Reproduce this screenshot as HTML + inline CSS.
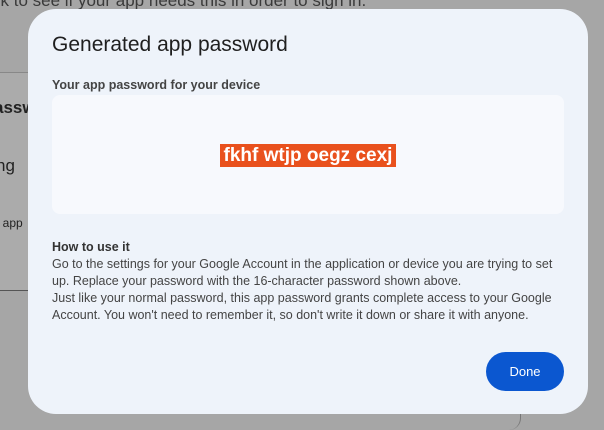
<!DOCTYPE html>
<html><head><style>
body{margin:0;width:604px;height:426px;overflow:hidden;background:#a6a6a6;font-family:"Liberation Sans",sans-serif;position:relative}
.bgtop{position:absolute;left:-8px;top:-9px;font-size:17px;color:#3a3a3a;white-space:nowrap}
.leftp{position:absolute;left:0;top:72px;width:40px;height:217px;background:#ababab;border-top:1px solid #888;border-bottom:1px solid #555}
.lt{position:absolute;font-size:17px;color:#222;white-space:nowrap}
.dlg{position:absolute;left:28px;top:9px;width:560px;height:405px;background:#eef3fa;border-radius:28px}
h1{position:absolute;left:24px;top:24px;margin:0;font-weight:normal;font-size:21px;color:#1f1f1f}
.lab{position:absolute;left:24px;top:69px;font-size:12.5px;font-weight:bold;color:#444}
.box{position:absolute;left:24px;top:86px;width:512px;height:119px;background:#f7f9fd;border-radius:8px}
.pw{position:absolute;left:192px;top:135px;height:23px;width:176px;background:#e9511d;color:#fff;font-weight:bold;font-size:19px;line-height:23px;text-align:center}
.how{position:absolute;left:24px;top:230px;font-size:12.5px;color:#444;line-height:17px;width:520px}
.how b{color:#333}
.btn{position:absolute;left:458px;top:343px;width:78px;height:39px;border-radius:20px;background:#0b57d0;color:#fff;font-size:13px;text-align:center;line-height:39px}
</style></head><body>
<div class="bgtop">ck to see if your app needs this in order to sign in.</div>
<div class="leftp"></div>
<div class="lt" style="left:-6px;top:98px;font-weight:bold">assw</div>
<div class="lt" style="left:-4px;top:156px">ng</div>
<div class="lt" style="left:-4px;top:216px;font-size:12px">/ app</div>
<div style="position:absolute;left:500px;top:400px;width:20px;height:30px;border-right:1px solid #777;border-bottom-right-radius:12px"></div>
<div class="dlg">
<h1>Generated app password</h1>
<div class="lab">Your app password for your device</div>
<div class="box"></div>
<div class="pw">fkhf wtjp oegz cexj</div>
<div class="how"><b>How to use it</b><br>Go to the settings for your Google Account in the application or device you are trying to set up. Replace your password with the 16-character password shown above.<br>Just like your normal password, this app password grants complete access to your Google Account. You won't need to remember it, so don't write it down or share it with anyone.</div>
<div class="btn">Done</div>
</div>
</body></html>
